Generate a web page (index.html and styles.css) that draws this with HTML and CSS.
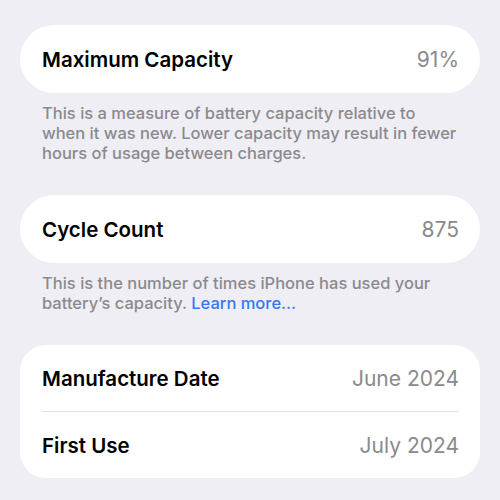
FILE: index.html
```html
<!DOCTYPE html>
<html lang="en">
<head>
    <meta charset="UTF-8">
    <title>Battery Health</title>
    <link rel="stylesheet" href="styles.css">
</head>
<body>
<div class="page">
    <div class="group">
        <div class="card pill">
            <div class="row">
                <span class="label">Maximum Capacity</span>
                <span class="value">91%</span>
            </div>
        </div>
        <p class="note">This is a measure of battery capacity relative to when it was new. Lower capacity may result in fewer hours of usage between charges.</p>
    </div>

    <div class="group">
        <div class="card pill">
            <div class="row">
                <span class="label">Cycle Count</span>
                <span class="value">875</span>
            </div>
        </div>
        <p class="note">This is the number of times iPhone has used your battery’s capacity. <a href="#">Learn more...</a></p>
    </div>

    <div class="group">
        <div class="card list">
            <div class="row">
                <span class="label">Manufacture Date</span>
                <span class="value">June 2024</span>
            </div>
            <div class="row">
                <span class="label">First Use</span>
                <span class="value">July 2024</span>
            </div>
        </div>
    </div>
</div>
</body>
</html>
```

FILE: styles.css
```css
* {
    margin: 0;
    padding: 0;
    box-sizing: border-box;
}

html, body {
    height: 100%;
}

body {
    background-color: #efeef4;
    font-family: Inter, "Liberation Sans", sans-serif;
    color: #000;
}

.page {
    padding: 25px 20px 0;
    display: flex;
    flex-direction: column;
}

.group {
    display: flex;
    flex-direction: column;
}

.card {
    background-color: #fff;
    padding: 0 21px 0 22px;
}

.card.pill {
    border-radius: 34px;
}

.card.list {
    border-radius: 26px;
}

.row {
    height: 68px;
    display: flex;
    align-items: center;
    justify-content: space-between;
}

.list .row {
    height: 66px;
}

.list .row + .row {
    height: 67px;
    border-top: 1px solid #e2e2e6;
}

.label {
    font-size: 20.5px;
    font-weight: 600;
}

.value {
    font-size: 21px;
    font-weight: 400;
    color: #8a8a8e;
}

.note {
    padding: 10px 20px 32px 22px;
    font-size: 16.5px;
    line-height: 20px;
    font-weight: 500;
    color: #8a8a8e;
}

.note a {
    color: #3478f6;
    text-decoration: none;
}
```
